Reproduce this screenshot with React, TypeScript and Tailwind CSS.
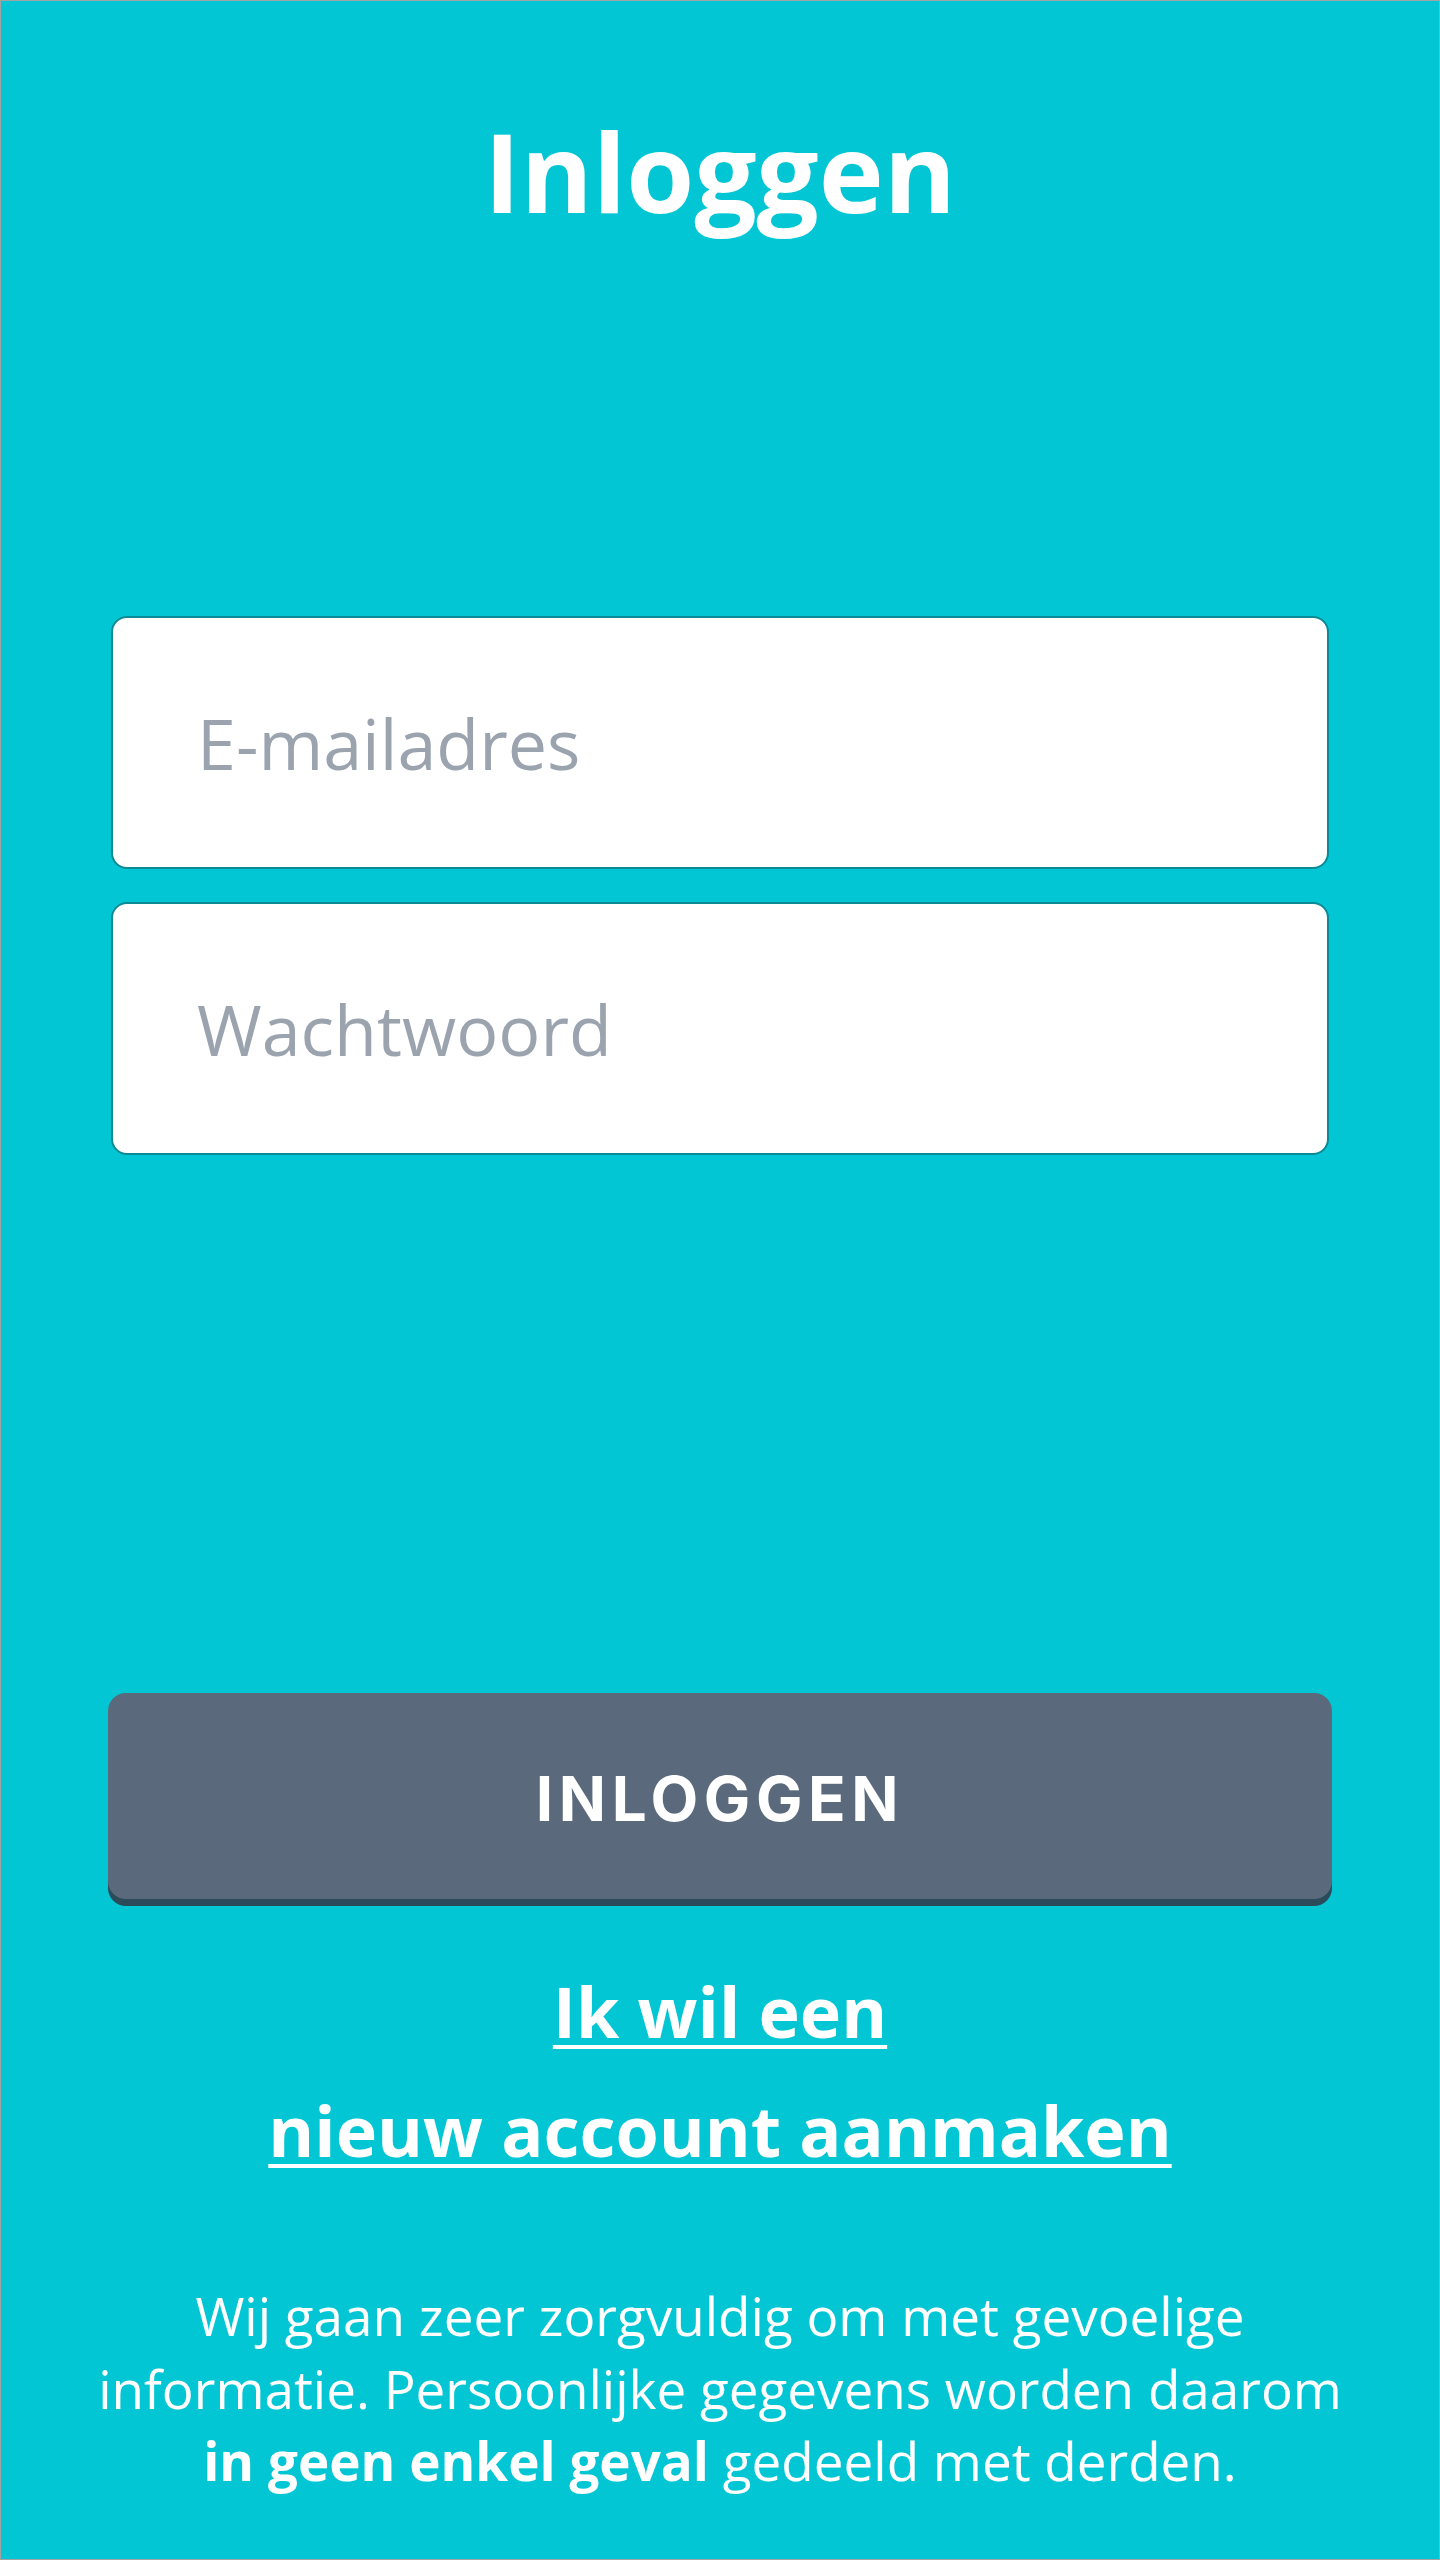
import React from "react";

const openSans = { fontFamily: '"Open Sans", "Liberation Sans", sans-serif' };

export default function App() {
  return (
    <div
      className="w-[1440px] h-[2560px] bg-[#03c6d5] border border-[#a3a3a3] flex flex-col items-center overflow-hidden"
      style={openSans}
    >
      {/* Title */}
      <h1 className="mt-[114px] text-[110px] leading-[110px] font-bold text-white">
        Inloggen
      </h1>

      {/* Form fields */}
      <div className="mt-[391px] w-[1218px] flex flex-col gap-[33px]">
        <input
          type="email"
          placeholder="E-mailadres"
          className="h-[253px] w-full rounded-[16px] bg-white border-2 border-[#0b8a95] pl-[84px] text-[70px] text-gray-700 placeholder:text-[#9aa3ae] outline-none"
          style={openSans}
        />
        <input
          type="password"
          placeholder="Wachtwoord"
          className="h-[253px] w-full rounded-[16px] bg-white border-2 border-[#0b8a95] pl-[84px] text-[70px] text-gray-700 placeholder:text-[#9aa3ae] outline-none"
          style={openSans}
        />
      </div>

      {/* Submit */}
      <button
        className="mt-[538px] w-[1224px] h-[206px] rounded-[18px] bg-[#5a697c] shadow-[0_7px_0_#2b4a5a] text-white text-[62px] font-bold tracking-[0.09em] pt-[5px]"
        style={{ fontFamily: 'Inter, Roboto, "Liberation Sans", sans-serif' }}
      >
        INLOGGEN
      </button>

      {/* Register link */}
      <a
        href="#"
        className="mt-[53px] text-center text-white font-bold text-[70px] leading-[119px] underline decoration-[4px] underline-offset-[7px]"
      >
        Ik wil een
        <br />
        nieuw account aanmaken
      </a>

      {/* Privacy note */}
      <p className="mt-[90px] text-center text-white font-normal text-[53px] leading-[72.5px]">
        Wij gaan zeer zorgvuldig om met gevoelige
        <br />
        informatie. Persoonlijke gegevens worden daarom
        <br />
        <span className="font-bold">in geen enkel geval</span> gedeeld met derden.
      </p>
    </div>
  );
}
